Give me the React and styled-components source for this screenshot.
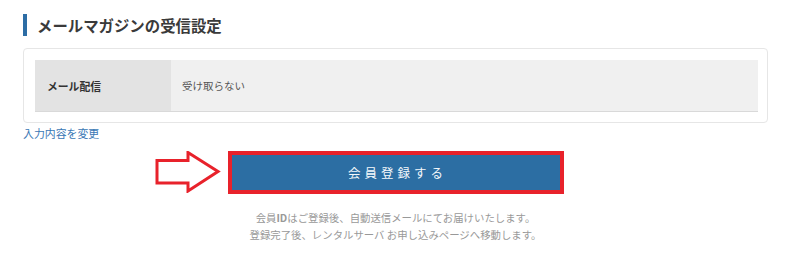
import React from 'react';
import styled, { createGlobalStyle } from 'styled-components';

const GlobalStyle = createGlobalStyle`
  html, body {
    margin: 0;
    padding: 0;
    background: #fff;
  }
  body {
    font-family: "Noto Sans CJK JP", "Noto Sans", sans-serif;
    color: #333;
  }
`;

const Page = styled.div`
  padding: 14px 32px 20px 23px;
`;

const Heading = styled.h2`
  margin: 0;
  display: flex;
  align-items: center;
  gap: 10px;
  height: 22px;
  font-size: 15.4px;
  font-weight: 700;
  color: #3a3a3a;
  line-height: 22px;

  &::before {
    content: '';
    width: 4px;
    height: 22px;
    background: #2d6da5;
  }
`;

const Card = styled.div`
  margin-top: 12px;
  border: 1px solid #e6e6e6;
  border-radius: 4px;
  padding: 11px 9px 10px 11px;
`;

const Row = styled.div`
  display: grid;
  grid-template-columns: 136px 1fr;
  height: 51px;
  border-bottom: 1px solid #d9d9d9;
`;

const Cell = styled.div`
  display: flex;
  align-items: center;
  padding-left: ${p => (p.$head ? '12px' : '11px')};
  background: ${p => (p.$head ? '#e3e3e3' : '#f0f0f0')};
  font-size: ${p => (p.$head ? '10.8px' : '10.5px')};
  font-weight: ${p => (p.$head ? 700 : 400)};
  color: ${p => (p.$head ? '#333' : '#555')};
`;

const EditLink = styled.a`
  display: block;
  width: fit-content;
  margin-top: 2px;
  font-size: 10.9px;
  line-height: 16px;
  color: #3a78b5;
  text-decoration: none;
`;

const Actions = styled.div`
  display: flex;
  justify-content: center;
  margin-top: 10px;
`;

const ButtonWrap = styled.div`
  position: relative;
`;

const SubmitButton = styled.button`
  display: block;
  width: 336px;
  height: 43px;
  border: 4px solid #e8222b;
  background: #2c6ea3;
  color: #f4f8fb;
  font-family: inherit;
  font-size: 12.5px;
  letter-spacing: 4px;
  text-indent: 4px;
  cursor: pointer;
`;

const Pointer = styled.svg`
  position: absolute;
  right: calc(100% + 7px);
  top: 0;
`;

const Note = styled.p`
  margin: 15px 0 0;
  text-align: center;
  font-size: 10.4px;
  line-height: 17px;
  color: #999;

  b {
    font-weight: 700;
  }
`;

function Arrow() {
  return (
    <Pointer width="66" height="42" viewBox="0 0 66 42">
      <polygon
        points="2,9.5 33,9.5 33,1.5 63,20.5 33,40 33,32 2,32"
        fill="#fff"
        stroke="#e8222b"
        strokeWidth="3"
        strokeLinejoin="miter"
      />
    </Pointer>
  );
}

export default function App() {
  return (
    <>
      <GlobalStyle />
      <Page>
        <Heading>メールマガジンの受信設定</Heading>
        <Card>
          <Row>
            <Cell $head>メール配信</Cell>
            <Cell>受け取らない</Cell>
          </Row>
        </Card>
        <EditLink href="#">入力内容を変更</EditLink>
        <Actions>
          <ButtonWrap>
            <Arrow />
            <SubmitButton type="button">会員登録する</SubmitButton>
          </ButtonWrap>
        </Actions>
        <Note>
          会員<b>ID</b>はご登録後、自動送信メールにてお届けいたします。
          <br />
          登録完了後、レンタルサーバ お申し込みページへ移動します。
        </Note>
      </Page>
    </>
  );
}
